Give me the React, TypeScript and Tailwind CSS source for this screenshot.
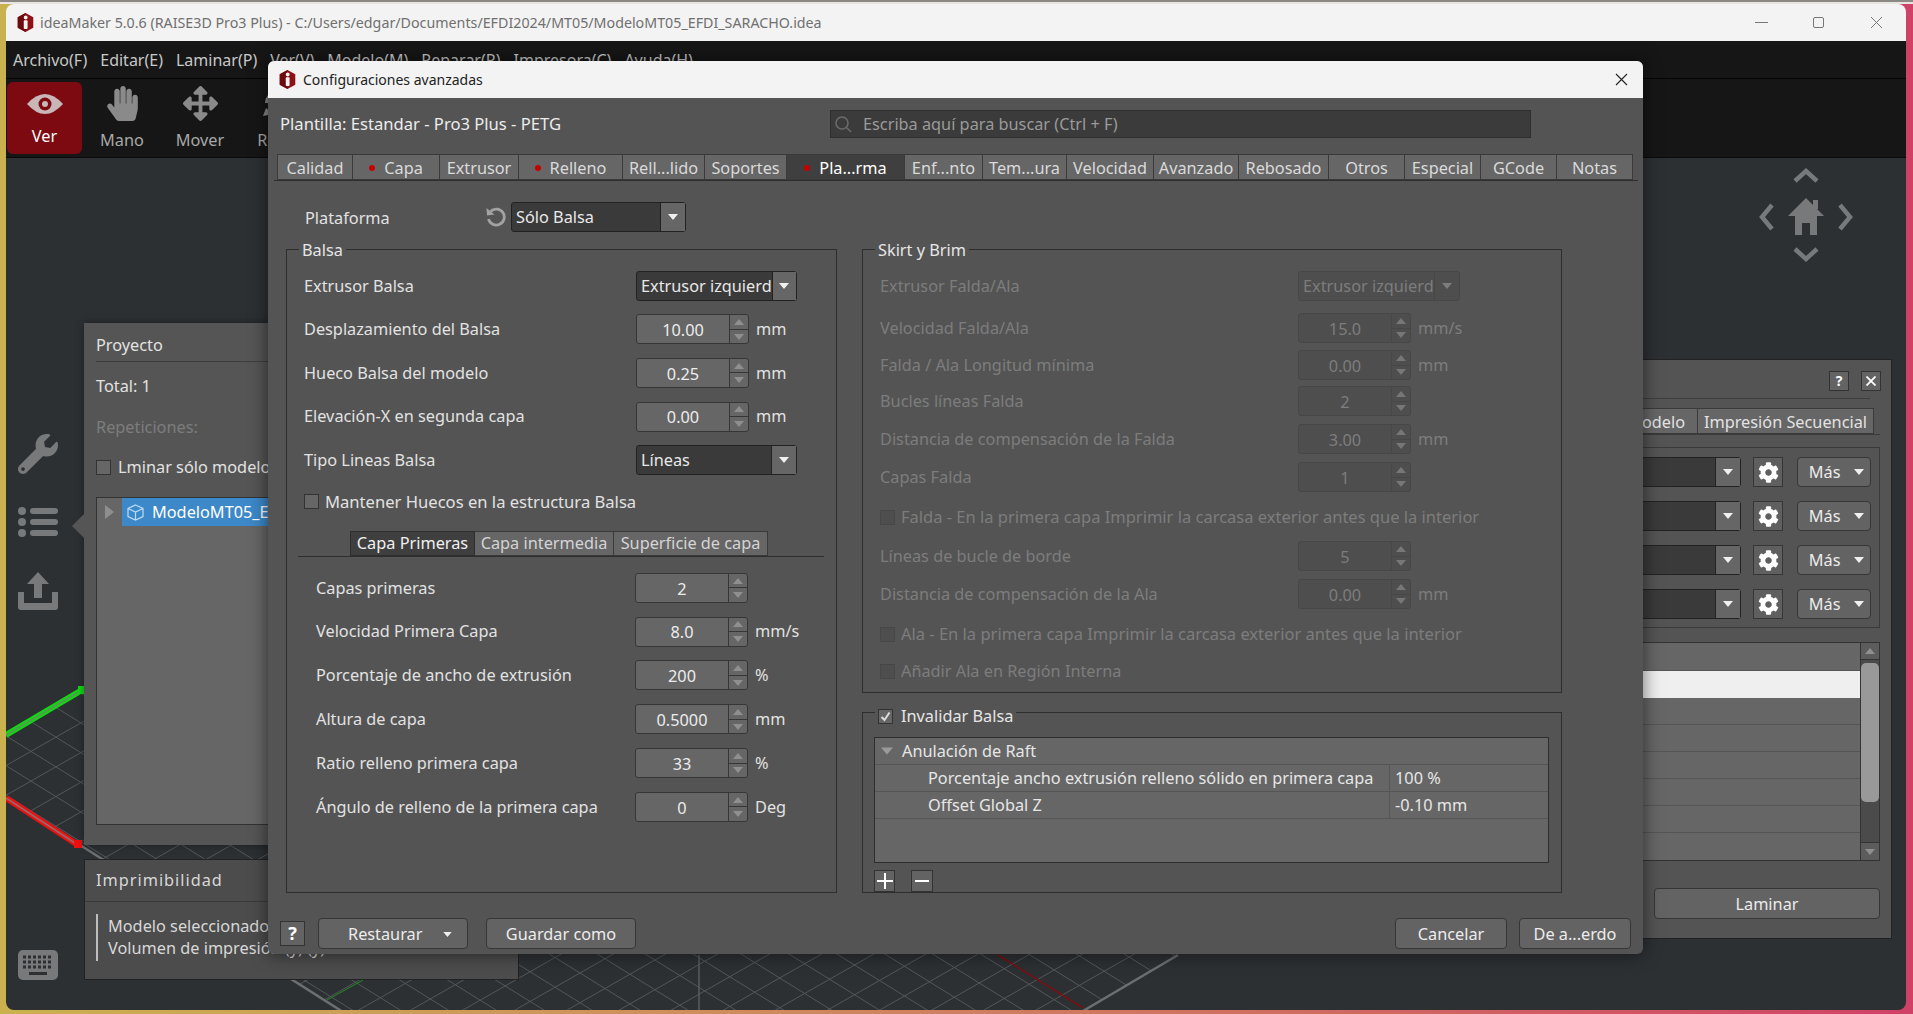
import { FaArrowsAlt, FaCog, FaHandPaper, FaWrench } from 'react-icons/fa'

function Logo({ size }: { size: number }) {
  return (
    <svg width={size} height={size} viewBox="0 0 20 22" className="shrink-0">
      <polygon points="10,0 19,5 19,17 10,22 1,17 1,5" fill="#8f1016" />
      <polygon points="10,0 10,22 1,17 1,5" fill="#6d0a0f" />
      <rect x="8" y="8.5" width="4.4" height="10" rx="1" fill="#f4f4f4" />
      <circle cx="10.2" cy="5.2" r="2.2" fill="#f4f4f4" />
    </svg>
  )
}

function Tri({ down = true, color = '#f0f0f0', w = 10, h = 6 }: { down?: boolean; color?: string; w?: number; h?: number }) {
  return (
    <svg width={w} height={h} viewBox="0 0 10 6" className="shrink-0">
      <polygon points={down ? '0,0 10,0 5,6' : '0,6 10,6 5,0'} fill={color} />
    </svg>
  )
}

function Spin({ value, disabled = false }: { value: string; disabled?: boolean }) {
  return (
    <div className={`flex h-[30px] w-[113px] shrink-0 rounded-[3px] border ${disabled ? 'border-[#474747] bg-[#4e4e4e] text-[#7d7d7d]' : 'border-[#363636] bg-[#666666] text-[#ececec]'}`}>
      <div className="flex flex-1 items-center justify-center pt-[2px]">{value}</div>
      <div className={`flex w-[19px] flex-col border-l ${disabled ? 'border-[#474747]' : 'border-[#363636]'}`}>
        <div className={`flex flex-1 items-center justify-center border-b ${disabled ? 'border-[#474747]' : 'border-[#363636]'}`}>
          <Tri down={false} color={disabled ? '#777777' : '#8f8f8f'} />
        </div>
        <div className="flex flex-1 items-center justify-center">
          <Tri color={disabled ? '#777777' : '#8f8f8f'} />
        </div>
      </div>
    </div>
  )
}

function Combo({ value, wide = false, disabled = false }: { value: string; wide?: boolean; disabled?: boolean }) {
  if (disabled) {
    return (
      <div className="flex h-[30px] w-[162px] shrink-0 rounded-[3px] border border-[#474747] bg-[#4e4e4e] text-[#7d7d7d]">
        <div className="flex-1 whitespace-nowrap pl-[4px] leading-[28px]">{value}</div>
        <div className="flex w-[26px] items-center justify-center border-l border-[#474747]">
          <Tri color="#7d7d7d" />
        </div>
      </div>
    )
  }
  return (
    <div className={`flex h-[30px] shrink-0 rounded-[3px] border border-[#222222] bg-[#3a3a3a] text-[#e8e8e8] ${wide ? 'w-[175px]' : 'w-[161px]'}`}>
      <div className="flex-1 whitespace-nowrap pl-[4px] leading-[28px]">{value}</div>
      <div className="flex w-[25px] items-center justify-center border-l border-[#222222] bg-[#666666]">
        <Tri />
      </div>
    </div>
  )
}

function Check({ checked = false, disabled = false }: { checked?: boolean; disabled?: boolean }) {
  return (
    <div className={`flex h-[15px] w-[15px] shrink-0 items-center justify-center border ${disabled ? 'border-[#474747] bg-[#4e4e4e]' : 'border-[#333333] bg-[#666666]'}`}>
      {checked && (
        <svg width="11" height="11" viewBox="0 0 11 11">
          <path d="M1.5 6 L4.5 9 L9.5 1.5" fill="none" stroke="#dddddd" strokeWidth="2" />
        </svg>
      )}
    </div>
  )
}

function Btn({ label, className }: { label: string; className: string }) {
  return (
    <div className={`flex h-[31px] items-center justify-center rounded-[4px] border border-[#363636] bg-[#636363] pt-[1px] text-[#ececec] ${className}`}>
      {label}
    </div>
  )
}

function Group({ label, className, children }: { label: React.ReactNode; className: string; children: React.ReactNode }) {
  return (
    <div className={`relative border border-[#2e2e2e] ${className}`}>
      <div className="absolute left-[12px] top-[-12px] bg-[#545454] px-[3px] text-[#e6e6e6]">{label}</div>
      {children}
    </div>
  )
}

const dialogTabs = [
  { label: 'Calidad', w: 'w-[76px]' },
  { label: 'Capa', w: 'w-[87px]', dot: true },
  { label: 'Extrusor', w: 'w-[79px]' },
  { label: 'Relleno', w: 'w-[104px]', dot: true },
  { label: 'Rell...lido', w: 'w-[82px]' },
  { label: 'Soportes', w: 'w-[82px]' },
  { label: 'Pla...rma', w: 'w-[118px]', dot: true, active: true },
  { label: 'Enf...nto', w: 'w-[78px]' },
  { label: 'Tem...ura', w: 'w-[84px]' },
  { label: 'Velocidad', w: 'w-[87px]' },
  { label: 'Avanzado', w: 'w-[85px]' },
  { label: 'Rebosado', w: 'w-[90px]' },
  { label: 'Otros', w: 'w-[76px]' },
  { label: 'Especial', w: 'w-[76px]' },
  { label: 'GCode', w: 'w-[76px]' },
  { label: 'Notas', w: 'w-[76px]' },
]

const balsaRows = [
  { label: 'Desplazamiento del Balsa', value: '10.00', unit: 'mm' },
  { label: 'Hueco Balsa del modelo', value: '0.25', unit: 'mm' },
  { label: 'Elevación-X en segunda capa', value: '0.00', unit: 'mm' },
]

const firstLayerRows = [
  { label: 'Capas primeras', value: '2', unit: '' },
  { label: 'Velocidad Primera Capa', value: '8.0', unit: 'mm/s' },
  { label: 'Porcentaje de ancho de extrusión', value: '200', unit: '%' },
  { label: 'Altura de capa', value: '0.5000', unit: 'mm' },
  { label: 'Ratio relleno primera capa', value: '33', unit: '%' },
  { label: 'Ángulo de relleno de la primera capa', value: '0', unit: 'Deg' },
]

const skirtRows = [
  { label: 'Velocidad Falda/Ala', value: '15.0', unit: 'mm/s', h: 'h-[42px]' },
  { label: 'Falda / Ala Longitud mínima', value: '0.00', unit: 'mm', h: 'h-[32px]' },
  { label: 'Bucles líneas Falda', value: '2', unit: '', h: 'h-[40px]' },
  { label: 'Distancia de compensación de la Falda', value: '3.00', unit: 'mm', h: 'h-[36px]' },
  { label: 'Capas Falda', value: '1', unit: '', h: 'h-[40px]' },
]

function PrintPanelRow() {
  return (
    <div className="flex items-center justify-end pr-[8px]">
      <div className="flex h-[30px] w-[141px] rounded-[3px] border border-[#222222] bg-[#3a3a3a]">
        <div className="flex-1" />
        <div className="flex w-[25px] items-center justify-center border-l border-[#222222] bg-[#666666]">
          <Tri />
        </div>
      </div>
      <div className="ml-[12px] flex h-[30px] w-[30px] items-center justify-center border border-[#363636] bg-[#5f5f5f] text-white">
        <FaCog size={21} />
      </div>
      <div className="ml-[14px] flex h-[30px] w-[74px] items-center justify-center gap-[13px] rounded-[4px] border border-[#363636] bg-[#636363] pl-[4px] text-[#ececec]">
        Más
        <Tri />
      </div>
    </div>
  )
}

function Canvas3D() {
  const steps: number[] = []
  for (let i = -40; i < 40; i++) steps.push(i)
  return (
    <svg viewBox="6 158 1900 854" width="1900" height="854" className="absolute inset-0">
      <defs>
        <clipPath id="plate">
          <polygon points="-49,767 500,440 1300,880 1178,955 1083,1012 343,1012" />
        </clipPath>
      </defs>
      <g clipPath="url(#plate)" stroke="#54575a" strokeWidth="1">
        {steps.map((i) => (
          <line key={`a${i}`} x1="-60" y1={1303.6 + i * 29.7 + 60 * 0.57} x2="1400" y2={1303.6 + i * 29.7 - 1400 * 0.57} />
        ))}
        {steps.map((i) => (
          <line key={`b${i}`} x1="-60" y1={613.4 + i * 29.7 - 60 * 0.62} x2="1400" y2={613.4 + i * 29.7 + 1400 * 0.62} />
        ))}
      </g>
      <line x1="80" y1="845" x2="343" y2="1012" stroke="#6c6e70" strokeWidth="2.5" />
      <line x1="1178" y1="955" x2="1083" y2="1011" stroke="#6c6e70" strokeWidth="2.5" />
      <line x1="699" y1="955" x2="699" y2="1012" stroke="#5a5c5e" strokeWidth="1.5" />
      <line x1="327" y1="1000" x2="363" y2="980" stroke="#1d8f1d" strokeWidth="1" />
      <line x1="998" y1="955" x2="1083" y2="1008" stroke="#7a1014" strokeWidth="1.5" />
      <line x1="6" y1="735" x2="82" y2="690" stroke="#12d812" strokeWidth="6" />
      <line x1="6" y1="735" x2="82" y2="690" stroke="#5f8f5f" strokeWidth="1.5" />
      <rect x="78" y="686" width="6" height="8" fill="#12d812" />
      <line x1="6" y1="798" x2="78" y2="845" stroke="#ef1010" strokeWidth="6" />
      <line x1="6" y1="798" x2="78" y2="845" stroke="#8f6a6a" strokeWidth="1.5" />
      <rect x="74" y="840" width="8" height="8" fill="#ef1010" />
    </svg>
  )
}

export default function App() {
  return (
    <div className="relative h-[1014px] w-[1913px] overflow-hidden bg-gradient-to-r from-[#c9b24e] to-[#cf4166] font-['Noto_Sans',sans-serif] text-[16.3px]">
      <div className="h-[4px] border-t-[2px] border-[#8b8885] bg-[#e8e4df]" />

      {/* Main window */}
      <div className="ml-[6px] flex h-[1006px] w-[1900px] flex-col overflow-hidden rounded-[8px]">
        <div className="flex h-[37px] items-center bg-[#f3f3f3]">
          <div className="ml-[10px]">
            <Logo size={19} />
          </div>
          <div className="ml-[5px] text-[14.25px] text-[#707070]">ideaMaker 5.0.6 (RAISE3D Pro3 Plus) - C:/Users/edgar/Documents/EFDI2024/MT05/ModeloMT05_EFDI_SARACHO.idea</div>
          <div className="ml-auto flex items-center">
            <div className="h-px w-[13px] bg-[#777777]" />
            <div className="ml-[45px] h-[11px] w-[11px] rounded-[2px] border border-[#777777]" />
            <svg width="13" height="13" viewBox="0 0 13 13" className="ml-[46px] mr-[23px]">
              <path d="M1 1 L12 12 M12 1 L1 12" stroke="#777777" strokeWidth="1" />
            </svg>
          </div>
        </div>
        <div className="flex h-[38px] items-center gap-[13px] border-b border-[#050505] bg-[#161616] pl-[7px] text-[16px] text-[#c8c8c8]">
          <span>Archivo(F)</span>
          <span>Editar(E)</span>
          <span>Laminar(P)</span>
          <span>Ver(V)</span>
          <span>Modelo(M)</span>
          <span>Reparar(R)</span>
          <span>Impresora(C)</span>
          <span>Ayuda(H)</span>
        </div>
        <div className="flex h-[79px] items-center gap-[2px] border-b border-[#0a0a0a] bg-[#161616] pl-[1px] text-[#a8a8a8]">
          <div className="flex h-[72px] w-[75px] flex-col items-center rounded-[6px] bg-[#7c0a10] pt-[7px] text-white">
            <svg width="36" height="24" viewBox="0 0 36 24" className="mt-[2px] h-[26px]">
              <path d="M0 12 Q18 -8 36 12 Q18 32 0 12 Z" fill="#c9b6b7" />
              <circle cx="18" cy="12" r="6.5" fill="#7c0a10" />
              <circle cx="18" cy="12" r="3" fill="#c9b6b7" />
            </svg>
            <span className="mt-[7px]">Ver</span>
          </div>
          <div className="flex h-[72px] w-[76px] flex-col items-center pt-[4px]">
            <FaHandPaper size={35} color="#8a8a8a" />
            <span className="mt-[7px]">Mano</span>
          </div>
          <div className="flex h-[72px] w-[76px] flex-col items-center pt-[4px]">
            <FaArrowsAlt size={35} color="#8a8a8a" />
            <span className="mt-[7px]">Mover</span>
          </div>
          <div className="flex h-[72px] w-[76px] flex-col items-center pt-[4px]">
            <svg width="35" height="35" viewBox="0 0 35 35">
              <path d="M6 17 A12 12 0 0 1 28 11" fill="none" stroke="#8a8a8a" strokeWidth="4" />
              <path d="M5 22 L2 30 L12 28 Z" fill="#8a8a8a" />
            </svg>
            <span className="mt-[7px]">Rotar</span>
          </div>
        </div>
        <div className="relative flex-1 bg-[#2d3033]">
          <Canvas3D />
          <div className="relative flex h-full w-[64px] flex-col items-center pb-[30px] pt-[276px] text-[#77797b]">
            <FaWrench size={40} />
            <svg width="40" height="30" viewBox="0 0 40 30" className="mt-[33px]" fill="#77797b">
              <circle cx="4" cy="4" r="4" />
              <circle cx="4" cy="15" r="4" />
              <circle cx="4" cy="26" r="4" />
              <rect x="12" y="1" width="28" height="6" rx="3" />
              <rect x="12" y="12" width="28" height="6" rx="3" />
              <rect x="12" y="23" width="28" height="6" rx="3" />
            </svg>
            <svg width="40" height="38" viewBox="0 0 40 38" className="mt-[35px]" fill="#77797b">
              <path d="M20 0 L31 12 H24 V26 H16 V12 H9 Z" />
              <path d="M0 20 H6 V31 H34 V20 H40 V35 Q40 38 37 38 H3 Q0 38 0 35 Z" />
            </svg>
            <svg width="40" height="30" viewBox="0 0 40 30" className="mt-auto">
              <rect width="40" height="30" rx="5" fill="#77797b" />
              <path d="M5 7 H35 M5 12 H35 M5 17 H35" stroke="#2d3033" strokeWidth="3" strokeDasharray="3 2" />
              <rect x="11" y="22" width="18" height="3" fill="#2d3033" />
            </svg>
          </div>
          <svg width="100" height="104" viewBox="0 0 100 104" className="absolute left-[1750px] top-[7px]" fill="none" stroke="#77797b" strokeWidth="4.5">
            <path d="M39 16 L50 6 L61 16" />
            <path d="M39 84 L50 94 L61 84" />
            <path d="M16 40 L6 52 L16 64" />
            <path d="M84 40 L94 52 L84 64" />
            <path d="M32 51 L50 33 L68 51 H61 V70 H54 V58 H46 V70 H39 V51 Z" fill="#77797b" stroke="none" />
            <rect x="57" y="35" width="5" height="9" fill="#77797b" stroke="none" />
          </svg>
        </div>
      </div>

      {/* Project panel */}
      <div className="absolute left-[84px] top-[323px] h-[522px] w-[220px] bg-[#555555] pl-[12px] pt-[8px] text-[#e2e2e2] shadow-[0_0_8px_rgba(0,0,0,0.4)]">
        <div className="absolute left-[-12px] top-[191px] h-0 w-0 border-y-[12px] border-r-[12px] border-y-transparent border-r-[#555555]" />
        <div className="h-[31px] border-b border-[#3d3d3d] leading-[28px]">Proyecto</div>
        <div className="mt-[12px] leading-[24px]">Total: 1</div>
        <div className="mt-[17px] leading-[24px] text-[#7d7d7d]">Repeticiones:</div>
        <div className="mt-[16px] flex items-center gap-[7px] whitespace-nowrap">
          <Check />
          <span>Lminar sólo modelo visible</span>
        </div>
        <div className="mt-[18px] h-[328px] border border-[#333333] bg-[#666666]">
          <div className="flex h-[28px] items-center">
            <div className="flex w-[25px] justify-center">
              <svg width="9" height="14" viewBox="0 0 9 14"><polygon points="0,0 9,7 0,14" fill="#8f8f8f" /></svg>
            </div>
            <div className="flex h-full flex-1 items-center gap-[8px] whitespace-nowrap bg-[#3c88c8] pl-[5px] text-white">
              <svg width="17" height="17" viewBox="0 0 17 17" fill="none" stroke="#bcdcf5" strokeWidth="1.2" className="shrink-0">
                <path d="M8.5 1 L16 4.5 V12.5 L8.5 16 L1 12.5 V4.5 Z M1 4.5 L8.5 8 L16 4.5 M8.5 8 V16" />
              </svg>
              ModeloMT05_EFDI
            </div>
          </div>
        </div>
      </div>

      {/* Printability panel */}
      <div className="absolute left-[84px] top-[859px] h-[121px] w-[435px] border border-[#222222] bg-[#4c4c4c] text-[#d8d8d8]">
        <div className="flex h-[42px] items-center border-b border-[#3a3a3a] pl-[11px] tracking-[1px]">Imprimibilidad</div>
        <div className="mt-[12px] flex gap-[10px] pl-[11px]">
          <div className="h-[47px] w-[2px] bg-[#bdbdbd]" />
          <div className="pt-[1px] leading-[22px]">
            <div>Modelo seleccionado</div>
            <div>Volumen de impresión (y) (y)</div>
          </div>
        </div>
      </div>

      {/* Slice panel */}
      <div className="absolute left-[1600px] top-[359px] flex h-[580px] w-[292px] flex-col border-b border-r border-t border-[#222222] bg-[#545454] pr-[11px] text-[#e2e2e2]">
        <div className="mt-[11px] flex justify-end gap-[12px]">
          <div className="flex h-[20px] w-[20px] items-center justify-center border border-[#333333] bg-[#636363] text-[14px] font-bold leading-none text-white">?</div>
          <div className="mr-[-1px] flex h-[20px] w-[20px] items-center justify-center border border-[#333333] bg-[#636363]">
            <svg width="10" height="10" viewBox="0 0 10 10"><path d="M0.5 0.5 L9.5 9.5 M9.5 0.5 L0.5 9.5" stroke="white" strokeWidth="1.8" /></svg>
          </div>
        </div>
        <div className="mr-[10px] mt-[7px] border-b border-[#3d3d3d]" />
        <div className="mt-[9px] flex h-[27px] border-b border-[#3a3a3a]">
          <div className="flex w-[97px] items-center justify-end border-y border-[#3a3a3a] bg-[#666666] pr-[12px] pt-[2px]">Modelo</div>
          <div className="flex w-[177px] items-center justify-center whitespace-nowrap border border-[#3a3a3a] bg-[#666666] pt-[2px]">Impresión Secuencial</div>
        </div>
        <div className="mt-[12px] flex h-[181px] flex-col gap-[14px] border border-[#3a3a3a] pt-[9px]">
          <PrintPanelRow />
          <PrintPanelRow />
          <PrintPanelRow />
          <PrintPanelRow />
        </div>
        <div className="mt-[14px] flex h-[219px] border border-[#333333] bg-[#666666]">
          <div className="flex-1">
            <div className="h-[28px] border-b border-[#555555]" />
            <div className="h-[27px] bg-[#efefef]" />
            <div className="h-[27px] border-b border-[#555555]" />
            <div className="h-[27px] border-b border-[#555555]" />
            <div className="h-[27px] border-b border-[#555555]" />
            <div className="h-[27px] border-b border-[#555555]" />
            <div className="h-[27px] border-b border-[#555555]" />
          </div>
          <div className="flex w-[19px] flex-col border-l border-[#333333] bg-[#4b4b4b]">
            <div className="flex h-[17px] items-center justify-center border-b border-[#333333] bg-[#5c5c5c]"><Tri down={false} color="#8f8f8f" /></div>
            <div className="mt-[3px] h-[139px] rounded-[5px] bg-[#999999]" />
            <div className="mt-auto flex h-[18px] items-center justify-center border-t border-[#333333] bg-[#5c5c5c]"><Tri color="#8f8f8f" /></div>
          </div>
        </div>
        <div className="mt-[27px] flex justify-end">
          <Btn label="Laminar" className="w-[226px]" />
        </div>
      </div>

      {/* Advanced settings dialog */}
      <div className="absolute left-[268px] top-[61px] h-[893px] w-[1375px] overflow-hidden rounded-[6px] bg-[#545454] text-[#e2e2e2] shadow-[0_0_18px_rgba(0,0,0,0.55)]">
        <div className="flex h-[37px] items-center bg-[#f3f3f3] pl-[10px] pr-[15px] text-[14px] text-[#222222]">
          <Logo size={19} />
          <span className="ml-[6px]">Configuraciones avanzadas</span>
          <svg width="13" height="13" viewBox="0 0 13 13" className="ml-auto">
            <path d="M1 1 L12 12 M12 1 L1 12" stroke="#222222" strokeWidth="1.1" />
          </svg>
        </div>
        <div className="mt-[12px] flex h-[28px] items-center pl-[12px]">
          <span className="w-[550px] text-[16.6px] text-[#ececec]">Plantilla: Estandar - Pro3 Plus - PETG</span>
          <div className="flex h-full w-[701px] items-center border border-[#2e2e2e] bg-[#3b3b3b] pl-[3px] text-[#9a9a9a]">
            <svg width="18" height="18" viewBox="0 0 18 18" fill="none" stroke="#6a6a6a" strokeWidth="1.6">
              <circle cx="8" cy="8" r="6" />
              <path d="M12.5 12.5 L17 17" />
            </svg>
            <span className="ml-[11px] pt-[1px]">Escriba aquí para buscar (Ctrl + F)</span>
          </div>
        </div>
        <div className="ml-[6px] mt-[16px] flex h-[27px] w-[1364px] border-b border-[#2e2e2e] pl-[3px]">
          {dialogTabs.map((t) => (
            <div
              key={t.label}
              className={`flex h-[26px] items-center justify-center gap-[9px] whitespace-nowrap border border-l-0 border-[#3a3a3a] pt-[2px] first:border-l ${t.w} ${t.active ? 'bg-[#3f3f3f] text-white' : 'bg-[#666666] text-[#dadada]'}`}
            >
              {t.dot && <span className="h-[6px] w-[6px] rounded-full bg-[#c40000]" />}
              {t.label}
            </div>
          ))}
        </div>

        <div className="mt-[21px] flex h-[30px] items-center pl-[37px]">
          <span className="w-[181px] pt-[2px]">Plataforma</span>
          <svg width="20" height="20" viewBox="0 0 20 20" fill="none" stroke="#a2a2a2" strokeWidth="2.8">
            <path d="M4.5 4.5 A8 8 0 1 1 2.5 12" />
            <path d="M0.5 1 L1 8.5 L8.5 7.5 Z" fill="#a2a2a2" stroke="none" />
          </svg>
          <div className="ml-[5px]">
            <Combo value="Sólo Balsa" wide />
          </div>
        </div>

        <div className="ml-[18px] mt-[17px] flex gap-[25px]">
          <Group label="Balsa" className="h-[644px] w-[551px] pl-[17px] pt-[14px]">
            <div className="flex h-[43.6px] items-center">
              <span className="w-[332px]">Extrusor Balsa</span>
              <Combo value="Extrusor izquierd" />
            </div>
            {balsaRows.map((r) => (
              <div key={r.label} className="flex h-[43.6px] items-center">
                <span className="w-[332px]">{r.label}</span>
                <Spin value={r.value} />
                <span className="ml-[7px]">{r.unit}</span>
              </div>
            ))}
            <div className="flex h-[43.6px] items-center">
              <span className="w-[332px]">Tipo Lineas Balsa</span>
              <Combo value="Líneas" />
            </div>
            <div className="mt-[2px] flex h-[36px] items-center gap-[6px]">
              <Check />
              <span className="text-[16.6px]">Mantener Huecos en la estructura Balsa</span>
            </div>
            <div className="ml-[-6px] mr-[12px] mt-[11px] flex h-[26px] border-b border-[#2e2e2e] pl-[52px]">
              <div className="flex h-[25px] w-[125px] items-center justify-center border border-[#2e2e2e] bg-[#3f3f3f] text-[#f0f0f0]">Capa Primeras</div>
              <div className="flex h-[25px] w-[139px] items-center justify-center whitespace-nowrap border-y border-r border-[#3a3a3a] bg-[#666666] text-[#d4d4d4]">Capa intermedia</div>
              <div className="flex h-[25px] w-[154px] items-center justify-center whitespace-nowrap border-y border-r border-[#3a3a3a] bg-[#666666] text-[#d4d4d4]">Superficie de capa</div>
            </div>
            <div className="mt-[9px] pl-[12px]">
              {firstLayerRows.map((r) => (
                <div key={r.label} className="flex h-[43.8px] items-center">
                  <span className="w-[319px]">{r.label}</span>
                  <Spin value={r.value} />
                  <span className="ml-[7px]">{r.unit}</span>
                </div>
              ))}
            </div>
          </Group>

          <div className="flex w-[700px] flex-col gap-[19px]">
            <Group label={<span className="text-[#e6e6e6]">Skirt y Brim</span>} className="h-[444px] pl-[17px] pt-[15px] text-[#7d7d7d]">
              <div className="flex h-[42px] items-center">
                <span className="w-[418px]">Extrusor Falda/Ala</span>
                <Combo value="Extrusor izquierd" disabled />
              </div>
              {skirtRows.map((r) => (
                <div key={r.label} className={`flex items-center ${r.h}`}>
                  <span className="w-[418px]">{r.label}</span>
                  <Spin value={r.value} disabled />
                  <span className="ml-[7px]">{r.unit}</span>
                </div>
              ))}
              <div className="flex h-[40px] items-center gap-[6px]">
                <Check disabled />
                <span className="text-[16.5px]">Falda - En la primera capa Imprimir la carcasa exterior antes que la interior</span>
              </div>
              <div className="flex h-[38px] items-center">
                <span className="w-[418px]">Líneas de bucle de borde</span>
                <Spin value="5" disabled />
              </div>
              <div className="flex h-[38px] items-center">
                <span className="w-[418px]">Distancia de compensación de la Ala</span>
                <Spin value="0.00" disabled />
                <span className="ml-[7px]">mm</span>
              </div>
              <div className="flex h-[42px] items-center gap-[6px]">
                <Check disabled />
                <span className="text-[16.5px]">Ala - En la primera capa Imprimir la carcasa exterior antes que la interior</span>
              </div>
              <div className="flex h-[32px] items-center gap-[6px]">
                <Check disabled />
                <span>Añadir Ala en Región Interna</span>
              </div>
            </Group>
            <Group
              label={
                <div className="flex items-center gap-[8px] pt-[3px]">
                  <Check checked />
                  <span>Invalidar Balsa</span>
                </div>
              }
              className="h-[181px] pl-[11px] pt-[24px]"
            >
              <div className="flex h-[126px] w-[675px] flex-col border border-[#2e2e2e] bg-[#666666] text-[#e6e6e6]">
                <div className="flex h-[27px] items-center gap-[9px] border-b border-[#555555] pl-[6px]">
                  <Tri color="#9a9a9a" w={12} h={8} />
                  Anulación de Raft
                </div>
                <div className="flex h-[27px] items-center border-b border-[#555555]">
                  <span className="w-[515px] whitespace-nowrap border-r border-[#555555] pl-[53px] leading-[26px]">Porcentaje ancho extrusión relleno sólido en primera capa</span>
                  <span className="pl-[5px]">100 %</span>
                </div>
                <div className="flex h-[27px] items-center border-b border-[#555555]">
                  <span className="w-[515px] border-r border-[#555555] pl-[53px] leading-[26px]">Offset Global Z</span>
                  <span className="pl-[5px]">-0.10 mm</span>
                </div>
              </div>
              <div className="mt-[7px] flex gap-[16px]">
                <div className="flex h-[22px] w-[21px] items-center justify-center border border-[#333333] bg-[#636363]">
                  <svg width="16" height="16" viewBox="0 0 16 16"><path d="M8 0 V16 M0 8 H16" stroke="white" strokeWidth="2" /></svg>
                </div>
                <div className="flex h-[22px] w-[22px] items-center justify-center border border-[#333333] bg-[#636363]">
                  <div className="h-[2px] w-[14px] bg-white" />
                </div>
              </div>
            </Group>
          </div>
        </div>

        <div className="ml-[12px] mt-[25px] flex items-center">
          <div className="flex h-[25px] w-[25px] items-center justify-center border border-[#333333] bg-[#636363] text-[18px] font-bold text-white">?</div>
          <div className="ml-[13px] flex h-[31px] w-[150px] items-center rounded-[4px] border border-[#363636] bg-[#636363] pl-[29px] pt-[1px] text-[#ececec]">
            Restaurar
            <span className="ml-[21px]"><Tri w={9} h={5} /></span>
          </div>
          <Btn label="Guardar como" className="ml-[18px] w-[150px]" />
          <Btn label="Cancelar" className="ml-auto w-[112px]" />
          <Btn label="De a...erdo" className="ml-[12px] mr-[12px] w-[112px]" />
        </div>
      </div>
    </div>
  )
}
